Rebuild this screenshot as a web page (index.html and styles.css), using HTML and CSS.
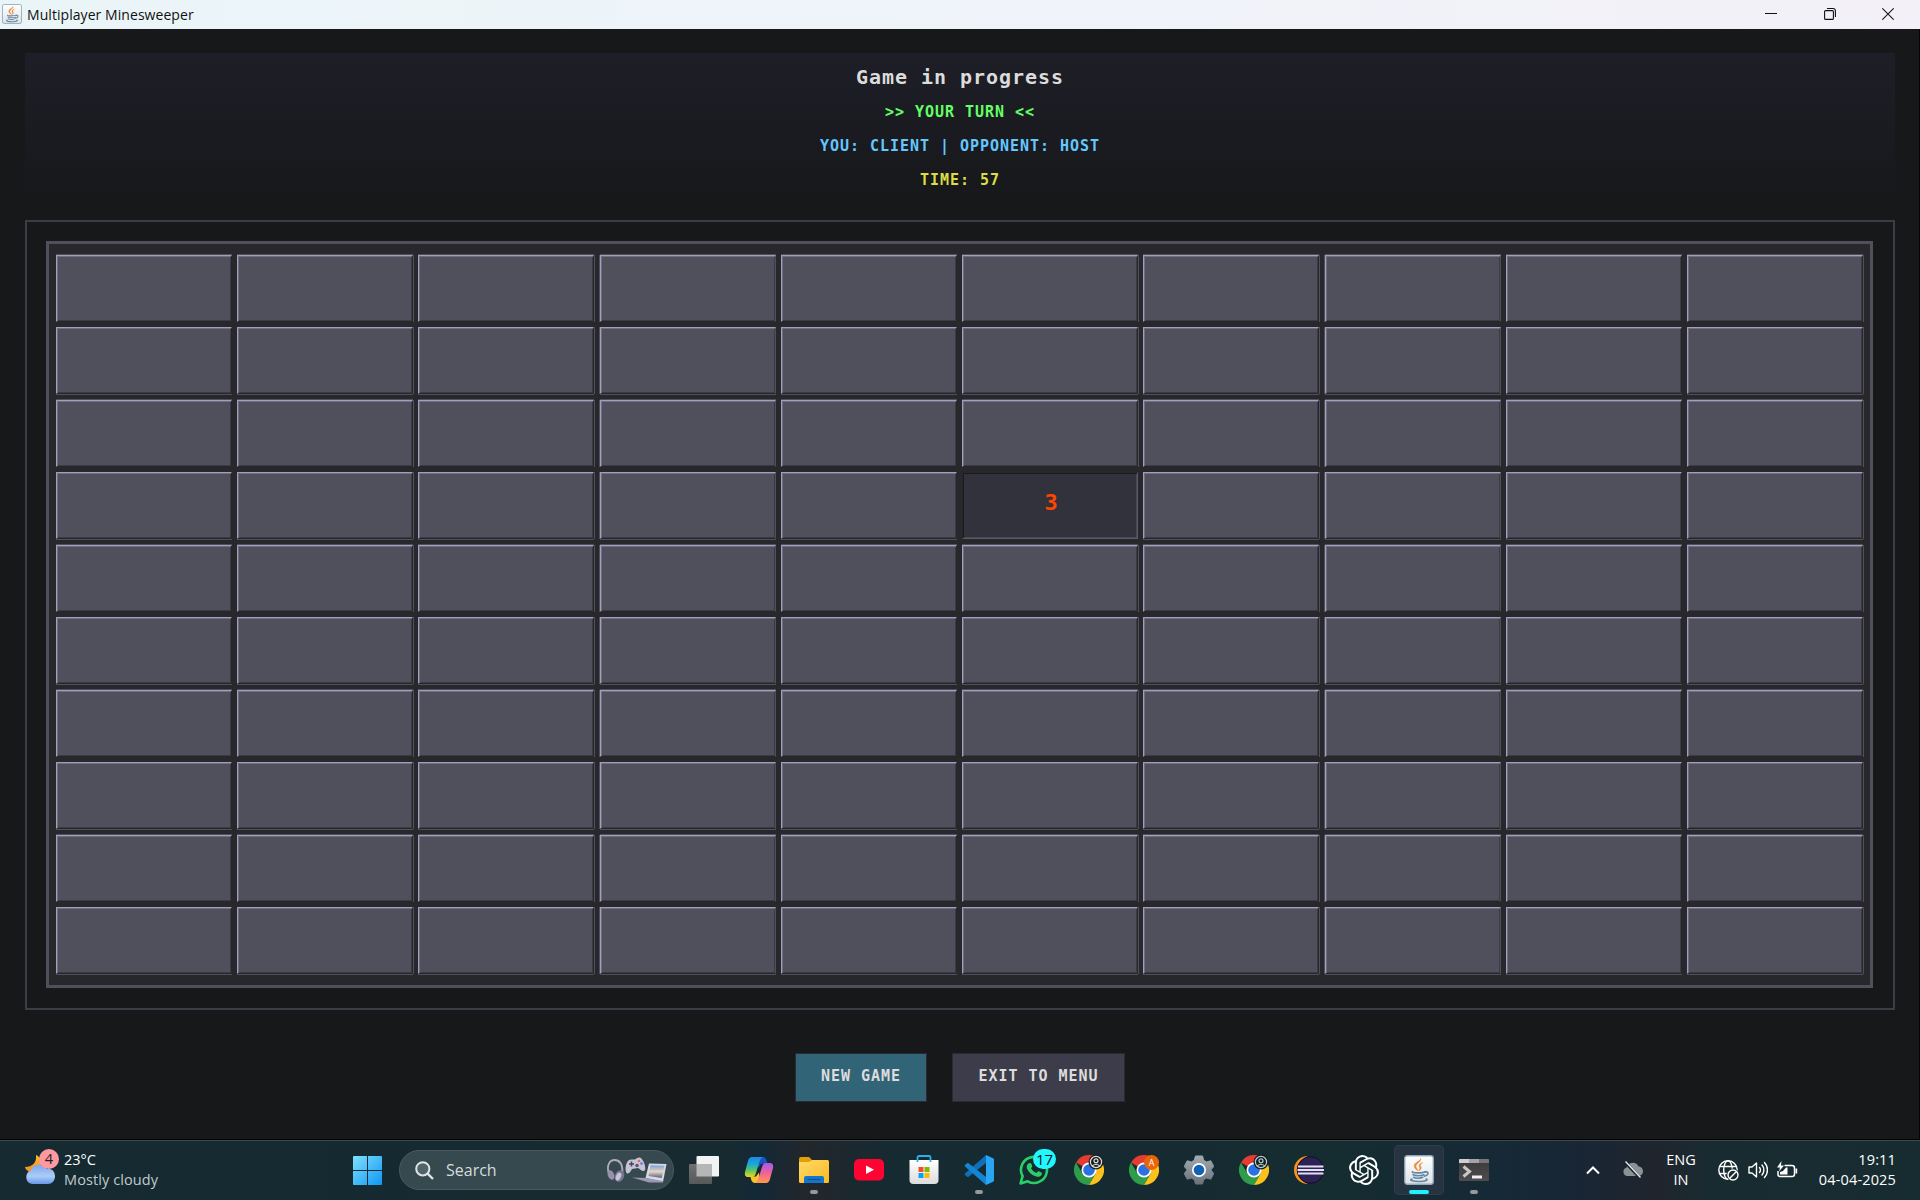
FILE: index.html
```html
<!DOCTYPE html>
<html lang="en">
<head>
<meta charset="utf-8">
<title>Multiplayer Minesweeper</title>
<link rel="stylesheet" href="styles.css">
</head>
<body>
<svg class="defs" width="0" height="0">
  <defs>
    <linearGradient id="winTile" x1="0" y1="0" x2="1" y2="1"><stop offset="0" stop-color="#7fe0fb"/><stop offset="1" stop-color="#0f97f5"/></linearGradient>
    <linearGradient id="cloud" x1="0" y1="0" x2="0" y2="1"><stop offset="0" stop-color="#7fa6ee"/><stop offset=".6" stop-color="#a9cdf8"/><stop offset="1" stop-color="#6a96e6"/></linearGradient>
    <linearGradient id="moon" x1="0" y1="0" x2="0" y2="1"><stop offset="0" stop-color="#fbc02e"/><stop offset="1" stop-color="#f58a1c"/></linearGradient>
    <linearGradient id="grayPane" x1="0" y1="0" x2="0" y2="1"><stop offset="0" stop-color="#6f7071"/><stop offset="1" stop-color="#575859"/></linearGradient>
    <linearGradient id="copL" x1="0" y1="0" x2="0" y2="1"><stop offset="0" stop-color="#1f86ea"/><stop offset=".35" stop-color="#18a8d8"/><stop offset=".65" stop-color="#58c467"/><stop offset="1" stop-color="#f2d51b"/></linearGradient>
    <linearGradient id="copR" x1="0" y1="0" x2="0" y2="1"><stop offset="0" stop-color="#a35bea"/><stop offset=".5" stop-color="#f0619c"/><stop offset="1" stop-color="#ff9a45"/></linearGradient>
    <linearGradient id="folder" x1="0" y1="0" x2="1" y2="1"><stop offset="0" stop-color="#ffda66"/><stop offset="1" stop-color="#fbba25"/></linearGradient>
    <linearGradient id="bag" x1="0" y1="0" x2="0" y2="1"><stop offset="0" stop-color="#ffffff"/><stop offset="1" stop-color="#dcdcdc"/></linearGradient>
    <linearGradient id="gear" x1="0" y1="0" x2="0" y2="1"><stop offset="0" stop-color="#a3abb2"/><stop offset="1" stop-color="#69727b"/></linearGradient>
    <linearGradient id="term" x1="0" y1="0" x2="0" y2="1"><stop offset="0" stop-color="#3a3a3a"/><stop offset="1" stop-color="#4d4d4d"/></linearGradient>
    <linearGradient id="javaBg" x1="0" y1="0" x2="0" y2="1"><stop offset="0" stop-color="#ffffff"/><stop offset="1" stop-color="#dfe2e5"/></linearGradient>
    <linearGradient id="screen" x1="0" y1="0" x2="0" y2="1"><stop offset="0" stop-color="#6fa6d8"/><stop offset=".5" stop-color="#ecd3c2"/><stop offset="1" stop-color="#4b6480"/></linearGradient>
    <symbol id="java" viewBox="0 0 30 30">
      <rect x=".75" y=".75" width="28.5" height="28.5" rx="2.5" fill="url(#javaBg)" stroke="#8fa9bd" stroke-width="1.3"/>
      <path d="M16.5 3.5c1.500 3.500-5.500 5-4.500 8.500.4 1.600 1.800 2.500 2.300 4-2.800-1.800-4.700-3.700-4-6C11 7 16.500 6.500 16.500 3.500zM18.800 7.500c-2.500 1-4 2-3.600 3.600.3 1.200 1.300 2.200-.2 4.700 2-1.200 2.800-2.600 1.700-4.200-.8-1.300 0-2.800 2.100-4.100z" fill="#ec8a35" stroke="#ec8a35" stroke-width=".5"/>
      <path d="M8.500 16.800c-2 1.200 9.500 1.600 12.700-.1M9 19.700c1.500 1.300 8 1.300 10.800 0M9.700 22.300c1.600 1.300 6.800 1.200 9 0M21 17.200c4-1.400 4.200 3-.6 4M8 24c-4 1.200 2 2.800 8 2.500 6-.2 8.500-1.800 6.300-2.600" fill="none" stroke="#5f87a6" stroke-width="1.600" stroke-linecap="round"/>
    </symbol>
    <symbol id="chrome" viewBox="0 0 30 30">
      <path d="M15 15 2 7.500A15 15 0 0 1 28 7.500H15z" fill="#e53b30"/>
      <path d="M2 7.500A15 15 0 0 0 15 30l6.500-11.200L8.500 18.700z" fill="#2e9c49"/>
      <path d="M15 15h6.500l.1 3.700L15 30A15 15 0 0 0 28 7.500H15z" fill="#fcc21b"/>
      <circle cx="15" cy="15" r="7.500" fill="#fff"/><circle cx="15" cy="15" r="5.800" fill="#2a72e4"/>
    </symbol>
    <symbol id="person" viewBox="0 0 16 16">
      <circle cx="8" cy="8" r="7.500" fill="#1b1d1f"/><circle cx="8" cy="8" r="5.600" fill="none" stroke="currentColor" stroke-width="1.200"/>
      <circle cx="8" cy="6.800" r="2" fill="none" stroke="currentColor" stroke-width="1.200"/><path d="M4.400 12c.8-2 6.400-2 7.200 0" fill="none" stroke="currentColor" stroke-width="1.200"/>
    </symbol>
  </defs>
</svg>

<div class="desktop">
  <header class="titlebar">
    <svg class="app-icon" width="20" height="20"><use href="#java"/></svg>
    <span class="window-title">Multiplayer Minesweeper</span>
    <div class="window-controls">
      <svg width="12" height="14" viewBox="0 0 12 14"><path d="M0 6.500h12" stroke="#111"/></svg>
      <svg width="12" height="14" viewBox="0 0 12 14" fill="none" stroke="#111" stroke-width="1.100"><rect x=".6" y="3.600" width="8.800" height="8.800" rx="1"/><path d="M3 1.500h6.200a2.200 2.200 0 0 1 2.200 2.200V10"/></svg>
      <svg width="12" height="14" viewBox="0 0 12 14"><path d="m.3 1.300 11.400 11.400m0-11.400L.3 12.700" stroke="#111" stroke-width="1.200"/></svg>
    </div>
  </header>

  <main class="game">
    <section class="status">
      <h1 class="status-title">Game in progress</h1>
      <p class="turn">&gt;&gt; YOUR TURN &lt;&lt;</p>
      <p class="players">YOU: CLIENT | OPPONENT: HOST</p>
      <p class="timer">TIME: 57</p>
    </section>
    <section class="frame">
      <div class="board" id="board"></div>
    </section>
    <div class="actions">
      <button class="btn btn-new">NEW GAME</button>
      <button class="btn btn-exit">EXIT TO MENU</button>
    </div>
  </main>

  <footer class="taskbar">
    <div class="weather">
      <div class="weather-icon">
        <svg width="30" height="30" viewBox="0 0 30 30"><path d="M11 0c1 8-4 12-11 12 1 4 5 6 9 5 6-1 9-7 7-12-1-2.500-3-4-5-5z" fill="url(#moon)"/><path d="M7 29a7 7 0 0 1-1-13.500C7 8 20 8 22 14c5-1 8 3 8 7.500 0 4-3 7.500-7 7.500z" fill="url(#cloud)"/></svg>
        <span class="weather-badge">4</span>
      </div>
      <div class="weather-text"><span>23°C</span><span class="weather-desc">Mostly cloudy</span></div>
    </div>

    <div class="center">
      <svg class="start" width="29" height="29" viewBox="0 0 29 29" fill="url(#winTile)"><path d="M1 0h13v14H0V1a1 1 0 0 1 1-1zM15 0h13a1 1 0 0 1 1 1v13H15zM0 15h14v14H1a1 1 0 0 1-1-1zM15 15h14v13a1 1 0 0 1-1 1H15z"/></svg>
      <div class="search">
        <svg width="19" height="19" viewBox="0 0 19 19" fill="none" stroke="#dfe5e7" stroke-width="2"><circle cx="7.800" cy="7.800" r="6.600" fill="#50656a"/><path d="m12.600 12.600 5.400 5.400" stroke-width="2.400"/></svg>
        <span class="search-label">Search</span>
        <svg width="60" height="26" viewBox="0 0 60 26">
          <path d="M2 17C-1 8 3 3 7.500 3c5 0 8 4 8 12" fill="none" stroke="#b3a9bd" stroke-width="1.800"/>
          <ellipse cx="4" cy="18" rx="3.200" ry="5" fill="#9690ae" transform="rotate(-20 4 18)"/><ellipse cx="12.500" cy="19" rx="4.500" ry="6" fill="#77758f" transform="rotate(25 12.500 19)"/><ellipse cx="11.500" cy="19.500" rx="2.500" ry="4.200" fill="#c9c3d6" transform="rotate(25 11.500 19.500)"/>
          <path d="M22 3c3-1 4-.5 5.500-.5S31-1 34 1c3 3 5 9 4 12-2 3-5-1-7-2l-6 1c-1.500 2-3 6-5.500 4-2-3-.5-11 2.500-13z" fill="#c8c3d8"/><path d="M22 7h5m-2.500-2.500v5" stroke="#454459" stroke-width="1.500"/><circle cx="32" cy="4" r="1.300" fill="#e36c5b"/><circle cx="34.500" cy="6.500" r="1.300" fill="#5b7fd0"/><circle cx="30" cy="8.500" r="1.800" fill="#5b5870"/>
          <path d="M42 6.500 59.500 7 56 25 38.500 21z" fill="#d8d7e5"/><path d="M43.500 8.300 57.500 8.700 54.700 21 41.500 19z" fill="url(#screen)"/><path d="m25 20.500 14 .5 17 3v1.500L42 25.500z" fill="#9c98b4"/>
        </svg>
      </div>
      <div class="apps">
        <div class="app"><svg width="30" height="30" viewBox="0 0 30 30"><rect x="7.500" y="1" width="22.500" height="20.500" rx="1" fill="#f3f3f3"/><rect y="9" width="23" height="20" rx="1" fill="url(#grayPane)"/><path d="M7.500 9H22a1 1 0 0 1 1 1v11.500H7.500z" fill="#b5b6b6"/></svg></div>
        <div class="app"><svg width="30" height="30" viewBox="0 0 30 30"><path d="M19 2c3 0 3.500 3 4.500 6.500L17 9l-3 4V3z" fill="#1b52c4"/><path d="M11 28c-3 0-4-3-4.500-6.500H12l3-4 1 9.500z" fill="#f5c52a"/><path d="M8 2h11c-2 1-3 3-4 6l-3 10c-1 3-2 4-4 4H4c-3 0-3.500-2.500-3-5L4 6c.7-2.500 2-4 4-4z" fill="url(#copL)"/><path d="M22 28H11c2-1 3-3 4-6l3-10c1-3 2-4 4-4h4c3 0 3.500 2.500 3 5l-3 11c-.7 2.500-2 4-4 4z" fill="url(#copR)"/></svg></div>
        <div class="app running"><svg width="30" height="30" viewBox="0 0 30 30"><path d="M0 4a2 2 0 0 1 2-2h8l3 3-3 5H0z" fill="#e0a007"/><path d="M0 7h10l3-2h15.500A1.500 1.500 0 0 1 30 6.500v20A1.500 1.500 0 0 1 28.500 28h-27A1.500 1.500 0 0 1 0 26.500z" fill="url(#folder)"/><path d="M5 28v-5a2 2 0 0 1 2-2h16a2 2 0 0 1 2 2v5z" fill="#1277cc"/><path d="M8.500 24.500h13" stroke="#0b4f94" stroke-width="1.200"/></svg></div>
        <div class="app"><svg width="30" height="30" viewBox="0 0 30 30"><rect y="4" width="30" height="21.500" rx="5" fill="#ff0433"/><path d="m12 10.500 8 4.300-8 4.300z" fill="#fff"/></svg></div>
        <div class="app"><svg width="30" height="30" viewBox="0 0 30 30"><path d="M.5 5h29v20a4 4 0 0 1-4 4h-21a4 4 0 0 1-4-4z" fill="url(#bag)"/><path d="M8.500 7V2.500A1.500 1.500 0 0 1 10 1h10a1.500 1.500 0 0 1 1.500 1.500V7" fill="none" stroke="#27b3e8" stroke-width="1.800"/><path d="M9.500 12h5v5h-5z" fill="#f25022"/><path d="M15.500 12h5v5h-5z" fill="#7fba00"/><path d="M9.500 18h5v5h-5z" fill="#00a4ef"/><path d="M15.500 18h5v5h-5z" fill="#ffb900"/></svg></div>
        <div class="app running"><svg width="30" height="30" viewBox="0 0 30 30"><path d="M22 0 1 18.500a1 1 0 0 0 0 1.500l2 1.800a1.200 1.200 0 0 0 1.600 0L22 8z" fill="#0f6fb8"/><path d="M22 30 1 11.500A1 1 0 0 1 1 10l2-1.800a1.200 1.200 0 0 1 1.600 0L22 22z" fill="#1286d2"/><path d="M22 0l7 3.200a1.500 1.500 0 0 1 1 1.500v20.600a1.500 1.500 0 0 1-1 1.500L22 30z" fill="#28a5f3"/></svg></div>
        <div class="app"><svg width="30" height="30" viewBox="0 0 30 30"><path d="M1.600 28.400l2-7.200A13 13 0 1 1 8.700 26.300z" fill="none" stroke="#27cf66" stroke-width="2.600" stroke-linejoin="round"/><path d="M10.500 8c.8-.3 1.500 0 1.800.8l.9 2.200c.2.700-.1 1.100-1.200 2.300 1.500 2.600 3.300 4 5.400 4.800 1.500-2 1.800-2.100 2.600-1.800l2.300 1.100c.9.500.7 1.100.5 1.800-.8 2.300-3.500 3-5.500 2.400-4.800-1.400-7.600-4.200-9.200-7.800-.8-2-.3-5 2.400-5.800z" fill="#27cf66"/></svg><span class="count-badge">17</span></div>
        <div class="app"><svg width="30" height="30"><use href="#chrome"/></svg><svg class="profile light" width="16" height="16"><use href="#person"/></svg></div>
        <div class="app"><svg width="30" height="30"><use href="#chrome"/></svg><span class="profile letter">A</span></div>
        <div class="app"><svg width="30" height="30" viewBox="0 0 30 30"><path d="M11.500 1h7l1.200 4.300 2.800 1.600 4.300-1.100 3 5.700L26.800 15l3 3.500-3 5.700-4.300-1.100-2.800 1.600L18.500 29h-7l-1.200-4.300-2.800-1.600-4.300 1.100-3-5.700L3.200 15l-3-3.500 3-5.700 4.300 1.100 2.800-1.600z" fill="url(#gear)" stroke="url(#gear)" stroke-linejoin="round"/><circle cx="15" cy="15" r="7" fill="#fff"/><circle cx="15" cy="15" r="5.300" fill="#1262b4"/></svg></div>
        <div class="app"><svg width="30" height="30"><use href="#chrome"/></svg><svg class="profile teal" width="16" height="16"><use href="#person"/></svg></div>
        <div class="app"><svg width="30" height="30" viewBox="0 0 30 30"><path d="M14 1A14 14 0 0 0 14 29C7 26 5 20 5 15S7 4 14 1z" fill="#f7941e"/><circle cx="16.500" cy="15" r="13.300" fill="#2c2255" stroke="#120d22"/><path d="M4 11.500h25.500M3.500 15h26.500M4 18.500h25.500" stroke="#e4e0f2" stroke-width="2"/></svg></div>
        <div class="app"><svg width="30" height="30" viewBox="0 0 24 24" fill="#fff"><path d="M22.280 9.820a5.980 5.980 0 0 0-.52-4.910 6.050 6.050 0 0 0-6.510-2.900A6.070 6.070 0 0 0 4.980 4.180a5.980 5.980 0 0 0-4 2.900 6.050 6.050 0 0 0 .74 7.100 5.980 5.980 0 0 0 .51 4.910 6.050 6.050 0 0 0 6.510 2.900A5.980 5.980 0 0 0 13.260 24a6.060 6.060 0 0 0 5.770-4.210 5.990 5.990 0 0 0 4-2.900 6.060 6.060 0 0 0-.75-7.070zM13.260 22.430a4.480 4.480 0 0 1-2.880-1.040l.14-.08 4.780-2.760a.79.79 0 0 0 .39-.68v-6.740l2.020 1.170a.07.07 0 0 1 .04.050v5.580a4.500 4.500 0 0 1-4.490 4.500zM3.600 18.300a4.470 4.470 0 0 1-.54-3.010l.14.080 4.780 2.760a.77.77 0 0 0 .78 0l5.840-3.370v2.330a.08.08 0 0 1-.03.060L9.740 19.950A4.500 4.500 0 0 1 3.600 18.300zM2.340 7.900a4.480 4.480 0 0 1 2.370-1.980v5.680a.77.77 0 0 0 .39.680l5.810 3.350-2.020 1.170a.08.08 0 0 1-.07 0l-4.830-2.790A4.500 4.500 0 0 1 2.340 7.900zM18.940 11.750 13.100 8.360l2.020-1.160a.08.08 0 0 1 .07 0l4.830 2.790a4.490 4.490 0 0 1-.68 8.100v-5.680a.79.79 0 0 0-.4-.66zM20.950 8.730l-.14-.09-4.770-2.780a.78.78 0 0 0-.79 0L9.410 9.230V6.900a.07.07 0 0 1 .03-.06l4.830-2.790a4.500 4.500 0 0 1 6.680 4.660zM8.310 12.860l-2.020-1.160a.08.08 0 0 1-.04-.06V6.070a4.500 4.500 0 0 1 7.380-3.450l-.14.080-4.780 2.760a.79.79 0 0 0-.39.680zM9.410 10.500 12.010 9l2.610 1.500v3L12.010 15 9.410 13.500z"/></svg></div>
        <div class="app running active"><svg width="30" height="30"><use href="#java"/></svg></div>
        <div class="app running"><svg width="30" height="30" viewBox="0 0 30 30"><path d="M0 5a1 1 0 0 1 1-1h28a1 1 0 0 1 1 1v20a1 1 0 0 1-1 1H1a1 1 0 0 1-1-1z" fill="url(#term)"/><path d="M0 8V5a1 1 0 0 1 1-1h9v4z" fill="#cfcfcf"/><path d="M10 4h10v4H10z" fill="#a9a3a9"/><path d="M20 4h9a1 1 0 0 1 1 1v3H20z" fill="#777"/><path d="m4.500 11.500 6 5-6 5" fill="none" stroke="#c7c7c7" stroke-width="3"/><path d="M13 20.500h10v3H13z" fill="#f0f0f0"/></svg></div>
      </div>
    </div>

    <div class="tray">
      <svg class="chevron" width="14" height="9" viewBox="0 0 14 9"><path d="m1 7.500 6-6 6 6" fill="none" stroke="#fff" stroke-width="2"/></svg>
      <svg class="cloud-off" width="22" height="18" viewBox="0 0 22 18"><path d="M4.500 15a4.500 4.500 0 0 1 0-8.500C6 .5 15 0 16.500 5.500c6 0 6 9.500 0 9.500z" fill="#8b9296"/><path d="m3 1 15 16" stroke="#17242e" stroke-width="3"/><path d="m3.500.5 15 16" stroke="#e8eaeb" stroke-width="1.300"/></svg>
      <div class="lang"><span>ENG</span><span>IN</span></div>
      <div class="status-icons">
        <svg width="21" height="21" viewBox="0 0 21 21" fill="none" stroke="#fff" stroke-width="1.400"><circle cx="10" cy="10" r="9.200"/><ellipse cx="10" cy="10" rx="4.300" ry="9.200"/><path d="M1.500 6.500h17M1.500 13.500h10"/><circle cx="15" cy="15" r="6.500" fill="#172b31" stroke="none"/><circle cx="15" cy="15" r="5"/><path d="m11.800 18.200 6.400-6.400"/></svg>
        <svg width="20" height="18" viewBox="0 0 20 18" fill="none" stroke="#fff" stroke-width="1.400" stroke-linecap="round" stroke-linejoin="round"><path d="M1 6h3l4.500-4v14L4 12H1z"/><path d="M11.500 6.500a4 4 0 0 1 0 5M14 4a7.500 7.500 0 0 1 0 10M16.500 1.500a11 11 0 0 1 0 15"/></svg>
        <svg width="21" height="18" viewBox="0 0 21 18"><path d="M7.500 4.500H15a2.500 2.500 0 0 1 2.500 2.500v6a2.500 2.500 0 0 1-2.500 2.500H3A2 2 0 0 1 1 13.500V10" fill="none" stroke="#fff" stroke-width="1.500"/><path d="M18.500 7.500h1.700v5h-1.700zM3 13.500V11l3-1 3-3.500h1.500v7z" fill="#fff"/><path d="M4.500 0 0 6.500h3L2 10.500l5-6H4z" fill="#fff"/></svg>
      </div>
      <div class="clock"><span>19:11</span><span>04-04-2025</span></div>
    </div>
  </footer>
</div>
<script src="board.js"></script>
</body>
</html>
```
FILE: styles.css
```css
* { box-sizing: border-box; }
body { margin: 0; background: #17181a; font-family: "Open Sans", "Noto Sans", sans-serif; }
.defs { position: absolute; }
.desktop { width: 1920px; height: 1200px; display: flex; flex-direction: column; overflow: hidden; }
svg { display: block; flex: none; }

/* Window title bar */
.titlebar { height: 29px; flex: none; display: flex; align-items: center; padding: 0 26px 0 2px; background: linear-gradient(90deg, #eaf5f8, #f0f3f9 60%, #f3f0f7); color: #111; font-size: 14px; }
.app-icon { margin-top: -2px; }
.window-title { margin: -1px 0 0 5px; letter-spacing: .06px; }
.window-controls { margin: -1px 0 0 auto; display: flex; gap: 46.500px; }

/* Game area */
.game { height: 1110px; flex: none; padding: 24px 24px 0 25px; border-right: 1px solid #050505; background: #17181a; font-family: "DejaVu Sans Mono", monospace; font-weight: bold; }
.status { height: 147px; display: flex; flex-direction: column; align-items: center; padding-top: 8px; background: linear-gradient(#1e1e28, #17181a); }
.status-title, .status p { margin: 0; font-size: 15px; line-height: 34px; letter-spacing: .97px; }
.status .status-title { font-size: 20px; line-height: 32px; letter-spacing: .96px; color: #dcdcdc; }
.status .turn { color: #64ff64; line-height: 38px; }
.status .players { color: #64c8ff; line-height: 31px; }
.status .timer { color: #dcdc46; line-height: 37px; }
.frame { margin-top: 20px; height: 790px; padding: 19px 20px 20px 19px; border: 2px solid #3c3c46; }
.board { height: 747px; padding: 11px 7px; border: 3px solid #50505c; background: #28282c; display: grid;
  grid-template-columns: 181px 181px 182px 181px 181px 181px 182px 181px 181px 176px;
  grid-template-rows: 72px 73px 72px 73px 72px 73px 72px 73px 72px 67px; }

/* Raised two-tone bevel with a thin seam at the right and bottom */
.cell { --r: 1px; --l: 0px; --t: -1px; --b: 0px; width: 176px; height: 67px; border: 1px solid; border-color: #a19fb9 #26262c #26262c #a19fb9; background: #50505c;
  box-shadow: inset 1px 1px #706e86, inset -1px -1px #3b3b46, var(--r) 0 #50505c, var(--l) 0 #50505c, 0 var(--t) #50505c, 0 var(--b) #50505c; }
.cell.flush { --r: 0px; }
.cell.seam-left { --l: -1px; --r: 0px; border-right-color: #50505c; }
.cell.seam-bottom { --t: 0px; --b: 1px; }
.cell.open { display: grid; place-items: center; border-color: #28282c #5c5b6e #5c5b6e #28282c; background: #32323c; box-shadow: inset 1px 1px #19191d, inset -1px -1px #484854, 1px 0 #28282c; color: #ff4500; font-size: 22px; line-height: 26px; padding: 0 0 6px 2px; }

.actions { display: flex; justify-content: center; gap: 25px; padding-top: 43px; }
.btn { height: 49px; padding: 0 0 4px; border: 1px solid #292a33; font: bold 15px "DejaVu Sans Mono", monospace; letter-spacing: .97px; color: #dcdcdc; }
.btn-new { width: 132px; background: #326478; }
.btn-exit { width: 173px; background: #3c3c4a; }

/* Taskbar */
.taskbar { height: 61px; flex: none; display: flex; align-items: center; border-top: 1px solid #000; box-shadow: inset 0 1px #3c4b4e; color: #fff; font-size: 14.500px;
  background: linear-gradient(90deg, #152b31, #162a30 38%, #132936 39.500%, #23262b 42%, #162a31 46%, #152c31 70%, #162936 78%, #182635 82%, #20252d 86.500%, #182b31 89%, #172c31); }
.weather { width: 327px; display: flex; padding-left: 25px; gap: 9px; margin-top: -4px; }
.weather-icon { position: relative; padding-top: 8px; }
.weather-badge { position: absolute; left: 14px; top: 2px; width: 20px; height: 20px; border-radius: 50%; background: #ff98a0; color: #222; text-align: center; line-height: 20px; }
.weather-text { display: flex; flex-direction: column; line-height: 20px; padding-top: 3px; }
.weather-desc { color: #c0cacd; letter-spacing: .1px; }
.center { display: flex; align-items: center; width: 1240px; }
.start { margin: 1px 17px 0 26px; }
.search { width: 275px; height: 40px; padding: 0 6px 0 15px; display: flex; align-items: center; border-radius: 20px; background: #36494e; border: 1px solid #4a5b5f; }
.search-label { margin: 0 auto 0 12px; font-size: 16px; color: #d5dcde; }
.apps { display: flex; margin-left: 5px; gap: 5px; }
.app { position: relative; width: 50px; height: 50px; display: grid; place-items: center; border-radius: 5px; }
.app.running::after { content: ""; position: absolute; left: 21px; bottom: 1px; width: 8px; height: 4px; border-radius: 2px; background: #93999d; }
.app.active { background: #263441; box-shadow: inset 0 0 0 1px #303d49; }
.app.active::after { left: 15px; width: 20px; background: #20f0ff; }
.count-badge { position: absolute; left: 24px; top: 4px; width: 23px; height: 20px; border-radius: 10px; background: #20f8ff; color: #111; text-align: center; line-height: 20px; font-size: 15px; }
.profile { position: absolute; left: 24px; top: 9px; }
.profile.light { color: #ddd; }
.profile.teal { color: #a8ced6; }
.profile.letter { width: 15px; height: 15px; top: 10px; left: 25px; border-radius: 50%; background: #e8650a; font-size: 9px; line-height: 15px; text-align: center; }
.tray { flex: 1; display: flex; align-items: center; padding-right: 24px; }
.chevron { margin-left: 19px; }
.cloud-off { margin-left: 22px; }
.lang { margin-left: 22px; width: 30px; display: flex; flex-direction: column; align-items: center; line-height: 20px; }
.status-icons { margin-left: 22px; display: flex; align-items: center; gap: 9px; }
.clock { margin-left: auto; display: flex; flex-direction: column; align-items: flex-end; line-height: 20px; letter-spacing: .15px; }
```
FILE: board.js
```js
const SIZE = 10;
const opened = { '3,5': '3' };
const board = document.getElementById('board');
for (let row = 0; row < SIZE; row++) {
  for (let col = 0; col < SIZE; col++) {
    const cell = document.createElement('div');
    cell.className = 'cell';
    if (col % 4 === 0) cell.classList.add('flush');
    if (col % 4 === 3) cell.classList.add('seam-left');
    if (row % 2 === 1) cell.classList.add('seam-bottom');
    const value = opened[row + ',' + col];
    if (value) {
      cell.classList.add('open');
      cell.textContent = value;
    }
    board.appendChild(cell);
  }
}
```
